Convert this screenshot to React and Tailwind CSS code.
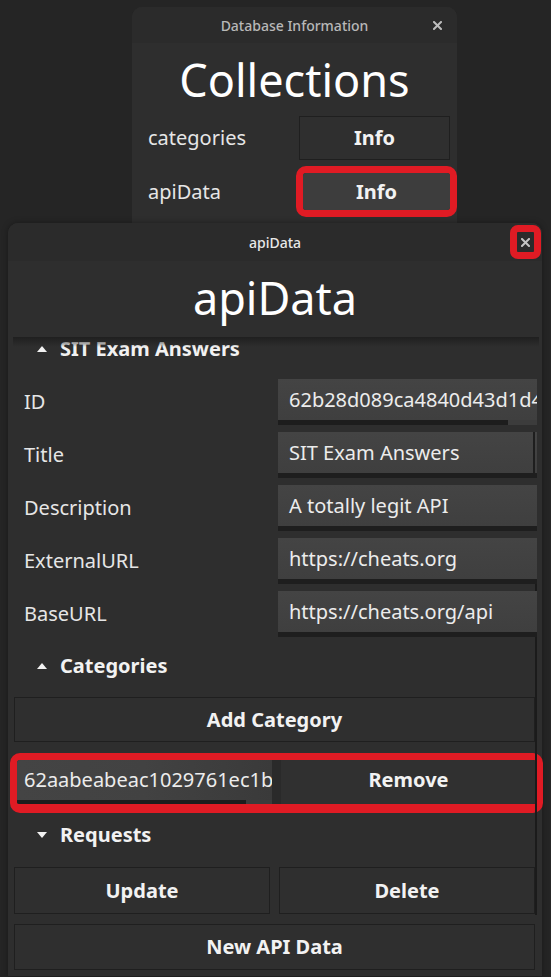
import React from "react";

const font = { fontFamily: '"Noto Sans", "Open Sans", sans-serif' };

function Tri({ down }) {
  return (
    <svg width="10" height="6" viewBox="0 0 10 6" className="block">
      {down ? (
        <polygon points="0,0 10,0 5,6" fill="#f2f2f2" />
      ) : (
        <polygon points="0,6 10,6 5,0" fill="#f2f2f2" />
      )}
    </svg>
  );
}

function CloseX({ color = "#bdbdbd" }) {
  return (
    <svg width="9" height="9" viewBox="0 0 9 9" className="block">
      <path d="M1 1 L8 8 M8 1 L1 8" stroke={color} strokeWidth="2" strokeLinecap="square" />
    </svg>
  );
}

function Section({ label, down, className = "" }) {
  return (
    <div className={"flex items-center h-[24px] pl-[23px] gap-[13px] " + className}>
      <Tri down={down} />
      <span className="text-[20px] font-bold text-[#f2f2f2] leading-none">{label}</span>
    </div>
  );
}

function Field({ label, value, bar = "full", rightEdge = false }) {
  return (
    <div className="flex items-center h-[46px]">
      <div className="flex-1 pl-[10px] text-[20px] text-[#e6e6e6] leading-none">{label}</div>
      <div className="w-[259px] -mr-[2px] h-[46px] flex flex-col relative">
        <div className="flex-1 flex items-center pl-[11px] overflow-hidden whitespace-nowrap text-[20px] text-[#ececec] leading-none bg-gradient-to-b from-[#444444] to-[#3f3f3f]">
          {value}
        </div>
        <div className="h-[5px] flex">
          {bar === "partial" ? (
            <>
              <div className="w-[230px] bg-[#1d1d1d]" />
              <div className="flex-1 bg-[#3c3c3c]" />
            </>
          ) : (
            <div className="flex-1 bg-[#1e1e1e]" />
          )}
        </div>
        {rightEdge && <div className="absolute right-[2px] top-0 bottom-[3px] w-[2px] bg-[#1e1e1e]" />}
      </div>
    </div>
  );
}

function Btn({ children, className = "" }) {
  return (
    <div
      className={
        "flex items-center justify-center bg-[#2f2f2f] border border-[#1f1f1f] text-[20px] font-bold text-[#f2f2f2] leading-none " +
        className
      }
    >
      {children}
    </div>
  );
}

export default function App() {
  return (
    <div className="relative w-[551px] h-[977px] bg-[#252525] overflow-hidden" style={font}>
      {/* Database Information window */}
      <div className="absolute left-[132px] top-[7px] w-[325px] h-[220px] rounded-t-[10px] bg-[#2e2e2e] flex flex-col">
        <div className="relative h-[36px] rounded-t-[10px] bg-[#2b2b2b] flex items-center justify-center">
          <span className="text-[14px] text-[#b8b8b8] font-medium">Database Information</span>
          <div className="absolute right-[15px] top-[14px]">
            <CloseX />
          </div>
        </div>
        <div className="h-[73px] flex items-center justify-center text-[45px] text-white leading-none">
          Collections
        </div>
        <div className="flex items-center h-[44px]">
          <div className="flex-1 pl-[16px] text-[20px] text-[#e6e6e6] leading-none">categories</div>
          <Btn className="w-[151px] h-[44px] mr-[7px] bg-[#2b2b2b] border-[#1a1a1a]">Info</Btn>
        </div>
        <div className="flex items-center h-[51px] mt-[6px]">
          <div className="flex-1 pl-[16px] text-[20px] text-[#e6e6e6] leading-none">apiData</div>
          <div className="w-[161px] h-[51px] border-[7px] border-[#e01b24] rounded-[10px] flex">
            <div className="flex-1 rounded-[3px] bg-[#3d3d3d] flex items-center justify-center text-[20px] font-bold text-[#f2f2f2] leading-none">
              Info
            </div>
          </div>
        </div>
      </div>

      {/* apiData window */}
      <div className="absolute left-[8px] top-[223px] w-[534px] h-[753px] rounded-t-[10px] bg-[#2e2e2e] flex flex-col shadow-[0_0_6px_rgba(0,0,0,0.35)]">
        <div className="relative h-[38px] rounded-t-[10px] bg-[#2b2b2b] flex items-center justify-center">
          <span className="text-[14px] text-[#e8e8e8] font-medium">apiData</span>
          <div className="absolute right-[1px] top-[2px] w-[31px] h-[34px] border-[7px] border-[#e01b24] rounded-[8px] flex items-center justify-center bg-[#2b2b2b]">
            <CloseX color="#c4c4c4" />
          </div>
        </div>
        <div className="h-[76px] flex items-center justify-center text-[45px] text-white leading-none pb-[4px]">
          apiData
        </div>
        <div className="relative ml-[5px] mr-[3px] flex-1 flex flex-col pl-[1px] pr-[4px]">
          <div className="absolute left-0 right-0 top-0 h-[10px] bg-gradient-to-b from-[#1f1f1f] to-transparent pointer-events-none" />
          <div className="absolute right-[2px] top-[232px] h-[346px] w-[2px] bg-[#1b1b1b]" />
          <Section label="SIT Exam Answers" />
          <div className="flex flex-col gap-[7px] mt-[18px]">
            <Field label="ID" value="62b28d089ca4840d43d1d4" bar="partial" />
            <Field label="Title" value="SIT Exam Answers" rightEdge />
            <Field label="Description" value="A totally legit API" />
            <Field label="ExternalURL" value="https://cheats.org" />
            <Field label="BaseURL" value="https://cheats.org/api" />
          </div>
          <Section label="Categories" className="mt-[17px]" />
          <Btn className="h-[45px] mt-[19px]">Add Category</Btn>
          <div className="mt-[11px] -ml-[4px] -mr-[8px] h-[60px] border-[7px] border-b-[9px] border-[#e01b24] rounded-[10px] flex gap-[9px] bg-[#2a2a2a]">
            <div className="w-[255px] flex flex-col rounded-l-[3px] overflow-hidden">
              <div className="flex-1 bg-gradient-to-r from-[#444444] via-[#424242] to-[#3a3a3a] flex items-center pl-[7px] overflow-hidden whitespace-nowrap text-[20px] text-[#ececec] leading-none">
                62aabeabeac1029761ec1bb
              </div>
              <div className="h-[4px] flex">
                <div className="w-[229px] bg-[#1d1d1d]" />
                <div className="flex-1 bg-[#3c3c3c]" />
              </div>
            </div>
            <div className="flex-1 bg-[#303030] rounded-r-[3px] flex items-center justify-center pb-[4px] text-[20px] font-bold text-[#f2f2f2] leading-none">
              Remove
            </div>
          </div>
          <Section label="Requests" down className="mt-[10px]" />
          <div className="flex gap-[9px] mt-[20px]">
            <Btn className="flex-1 h-[47px]">Update</Btn>
            <Btn className="flex-1 h-[47px]">Delete</Btn>
          </div>
          <Btn className="h-[46px] mt-[10px]">New API Data</Btn>
        </div>
      </div>
    </div>
  );
}
